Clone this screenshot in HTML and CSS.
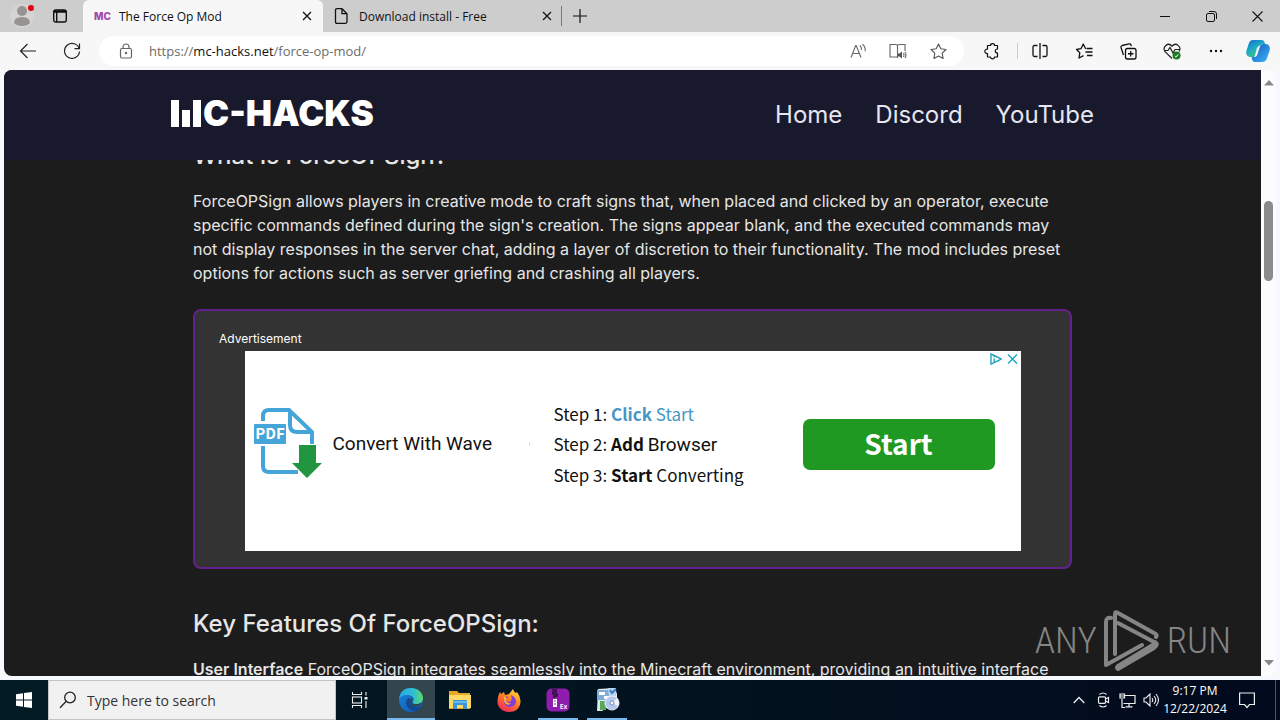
FILE: index.html
```
<!DOCTYPE html>
<html lang="en">
<head>
<meta charset="utf-8">
<title>The Force Op Mod</title>
<link rel="stylesheet" href="styles.css">
</head>
<body>
<div class="tabbar">
  <button class="profile" aria-label="Profile">
    <svg width="28" height="28" viewBox="0 0 28 28"><circle cx="14" cy="14" r="12" fill="#d6d4d2"/><circle cx="14" cy="9" r="5" fill="#969492"/><path d="M6 21q0-6 8-6t8 6q-3 3-8 3t-8-3z" fill="#969492"/><circle cx="23" cy="6" r="3" fill="#e3000f"/></svg>
  </button>
  <button class="workspaces" aria-label="Tab actions">
    <svg width="16" height="16" viewBox="0 0 16 16" fill="none" stroke="#111" stroke-width="1.4"><rect x="1.7" y="2" width="12.6" height="12" rx="2"/><path d="M2 3.500h12" stroke-width="2.500"/><path d="M4.700 4v10"/></svg>
  </button>
  <div class="tab tab-active">
    <span class="favicon">MC</span>
    <span class="tab-title">The Force Op Mod</span>
    <button class="tab-close" aria-label="Close tab"><svg width="10" height="10" viewBox="0 0 10 10" stroke="#111" stroke-width="1.3"><path d="M1 1l8 8M9 1l-8 8"/></svg></button>
  </div>
  <div class="tab tab-second">
    <svg class="page-icon" width="16" height="18" viewBox="0 0 16 18" fill="none" stroke="#111" stroke-width="1.3"><path d="M4 1.700h5l5 5v8.100q0 1.500-1.500 1.500h-8.500q-1.500 0-1.500-1.500v-11.600q0-1.500 1.500-1.500zM9 2v4.700h5"/></svg>
    <span class="tab-title">Download install - Free</span>
    <button class="tab-close" aria-label="Close tab"><svg width="10" height="10" viewBox="0 0 10 10" stroke="#111" stroke-width="1.2"><path d="M1 1l8 8M9 1l-8 8"/></svg></button>
  </div>
  <button class="new-tab" aria-label="New tab"><svg width="14" height="14" viewBox="0 0 14 14" stroke="#111" stroke-width="1.2"><path d="M7 0v14M0 7h14"/></svg></button>
  <div class="window-controls">
    <button aria-label="Minimize"><svg width="10" height="10" viewBox="0 0 10 10"><path d="M0 5.500h10" stroke="#111"/></svg></button>
    <button aria-label="Restore"><svg width="11" height="11" viewBox="0 0 11 11" fill="none" stroke="#111"><rect x=".5" y="2.500" width="8" height="8" rx="1.500"/><path d="M3 .500h5q2.500 0 2.500 2.500v5"/></svg></button>
    <button aria-label="Close"><svg width="11" height="11" viewBox="0 0 11 11" stroke="#111" stroke-width="1.100"><path d="M.5.500l10 10M10.500.500l-10 10"/></svg></button>
  </div>
</div>
<div class="toolbar">
  <button class="tool" aria-label="Back"><svg width="18" height="16" viewBox="0 0 18 16" fill="none" stroke="#222" stroke-width="1.200"><path d="M17 8H1.500M8.500 1l-7 7 7 7"/></svg></button>
  <button class="tool" aria-label="Refresh"><svg width="18" height="18" viewBox="0 0 18 18" fill="none" stroke="#222" stroke-width="1.200"><path d="M16.300 7A7.500 7.500 0 1 0 16.500 9.500M16.500 1.500v5.200h-5"/></svg></button>
  <div class="address">
    <button class="lock" aria-label="Site information"><svg width="14" height="16" viewBox="0 0 14 16" fill="none" stroke="#666" stroke-width="1.200"><rect x="1.500" y="5.500" width="11" height="9.500" rx="1.500"/><path d="M4 5.500V4a3 3 0 0 1 6 0v1.500"/><circle cx="7" cy="10" r=".6" fill="#666"/></svg></button>
    <a class="url" href="https://mc-hacks.net/force-op-mod/">https://<span class="host">mc-hacks.net</span>/force-op-mod/</a>
    <button class="page-action" aria-label="Read aloud"><svg width="17" height="16" viewBox="0 0 17 16" fill="none" stroke="#666" stroke-width="1.100"><path d="M1 14.500L5.700 2.500h.5L11 14.500M2.800 10.500h6.300M10 2.500q1.700 1.500 1.500 4.500M12.500 1.200q3.200 2.500 2.700 7"/></svg></button>
    <button class="page-action" aria-label="Immersive reader"><svg width="18" height="16" viewBox="0 0 18 16" fill="none" stroke="#666" stroke-width="1.100"><path d="M8.500 14H1V1.500h5.500q2 0 2 1.500 0-1.500 2-1.500H16V8M8.500 3v12"/><path d="M9 10.500h1.500l2.500-2v7l-2.500-2H9z" fill="#555" stroke="none"/><path d="M14.500 10q1 2 0 4M16 9q2 3 0 6"/></svg></button>
    <button class="page-action" aria-label="Add to favorites"><svg width="17" height="17" viewBox="0 0 17 17" fill="none" stroke="#555" stroke-width="1.100" stroke-linejoin="round"><path d="M8.500 1l2.300 4.800 5.200.7-3.800 3.700.9 5.300-4.600-2.500-4.600 2.500.9-5.300L1 6.500l5.200-.7z"/></svg></button>
  </div>
  <button class="tool tool-extensions" aria-label="Extensions"><svg width="17" height="17" viewBox="0 0 17 17" fill="none" stroke="#111" stroke-width="1.200" stroke-linejoin="round"><path d="M4.500 2.500h3a2 1.800 0 0 1 4 0h3V6a2.200 2 0 0 0 0 4v4h-3a2 1.800 0 0 1-4 0h-3v-3.500a2.200 2.200 0 1 1 0-4.300z"/></svg></button>
  <span class="tool-divider"></span>
  <button class="tool" aria-label="Split screen"><svg width="16" height="16" viewBox="0 0 16 16" fill="none" stroke="#111" stroke-width="1.300"><path d="M5.500 2.500H2.500q-1.500 0-1.500 1.500v8q0 1.500 1.500 1.500h3M10.500 2.500h3q1.500 0 1.500 1.500v8q0 1.500-1.500 1.500h-3M8 0v16"/></svg></button>
  <button class="tool" aria-label="Favorites"><svg width="17" height="16" viewBox="0 0 17 16" fill="none" stroke="#111" stroke-width="1.300" stroke-linejoin="round"><path d="M10 5.500H9.500L7.200 1 5 5.700l-4.500.8 3.300 3.200L3 15l4.500-2.300M10.500 5.500h6M9.500 9h7M11 12.500h5.500"/></svg></button>
  <button class="tool" aria-label="Collections"><svg width="17" height="17" viewBox="0 0 17 17" fill="none" stroke="#111" stroke-width="1.300"><rect x="5.500" y="5.500" width="10.500" height="10.500" rx="2"/><path d="M10.750 8v5.500M8 10.750h5.500M3.500 12L1 4.500q-.3-1.500 1.200-2L9 .900q1.500-.3 2 1l.3 1.300"/></svg></button>
  <button class="tool" aria-label="Browser essentials"><svg width="18" height="17" viewBox="0 0 18 17" fill="none" stroke="#222" stroke-width="1.200"><path d="M9 15.500L2 8.700C-1 4 5-1.500 9 3.200c4-4.700 10 .8 7 5.300M1 7.500h4l2-3 3 5.500 2-3.500h5"/><circle cx="13.500" cy="12.500" r="4" fill="#197b25" stroke="none"/><path d="M11.700 13l1.200 1.200 2.400-3" stroke="#fff" stroke-width="1"/></svg></button>
  <button class="tool" aria-label="Settings and more"><svg width="14" height="4" viewBox="0 0 14 4"><g fill="#111"><circle cx="2" cy="2" r="1.200"/><circle cx="7" cy="2" r="1.200"/><circle cx="12" cy="2" r="1.200"/></g></svg></button>
  <button class="copilot" aria-label="Copilot"><svg width="24" height="24" viewBox="0 0 24 24"><defs><linearGradient id="cpA" x2=".6" y2="1"><stop stop-color="#1765c8"/><stop offset=".45" stop-color="#18a5c8"/><stop offset="1" stop-color="#45c48c"/></linearGradient><linearGradient id="cpB" y2="1"><stop stop-color="#1654bd"/><stop offset="1" stop-color="#3bb8fa"/></linearGradient></defs><path d="M17 5h3q5 1 3.500 7L21 19q-1 4-5 4H9q-2.500 0-3-3l-.4-2H8q2.200 0 3-2l2.800-8.500Q14.500 5 17 5z" fill="url(#cpB)"/><path d="M7 1h9q2 0 2.700 2.500L19 5h-2q-2.500 0-3.200 2.500L11 16q-.8 2-3 2H4q-5-1-3.500-6.500L3 4q1-3 4-3z" fill="url(#cpA)"/><path d="M15 6.500q-1 .5-1.500 2L11 16q-.7 1.800-2.500 2L11 9q.8-2.300 4-2.500z" fill="#f7f7f7"/></svg></button>
</div>
<div class="window">
  <div class="page">
    <header class="site-header">
      <div class="site-header-inner">
        <a class="logo" href="#"><svg width="32" height="27" viewBox="0 0 32 27" fill="#fff" aria-hidden="true"><path d="M0 0h8v27H0zM11 10h8v17h-8zM22 0h8v27h-8z"/></svg><span>C-HACKS</span></a>
        <nav class="site-nav"><a href="#">Home</a><a href="#">Discord</a><a href="#">YouTube</a></nav>
      </div>
    </header>
    <main class="article">
      <h2>What Is ForceOPSign?</h2>
      <p>ForceOPSign allows players in creative mode to craft signs that, when placed and clicked by an operator, execute<br>specific commands defined during the sign's creation. The signs appear blank, and the executed commands may<br>not display responses in the server chat, adding a layer of discretion to their functionality. The mod includes preset<br>options for actions such as server griefing and crashing all players.</p>
      <section class="ad-box">
        <div class="ad-label">Advertisement</div>
        <div class="ad">
          <div class="ad-product">
            <svg width="70" height="72" viewBox="0 0 70 72" fill="none" stroke="#45a5d8" stroke-width="4"><path d="M9 13V8q0-6 6-6h20l23 22v12M36 2v15q0 7 7 7h15M9 38v20q0 6 6 6h29"/><rect y="16" width="32" height="20" rx="1" fill="#45a5d8" stroke="none"/><path d="M45 37h17v18h6L53 70 38 55h7z" fill="#219540" stroke="none"/><text x="16" y="31" text-anchor="middle" class="pdf-text">PDF</text></svg>
            <span>Convert With Wave</span>
          </div>
          <span class="ad-divider"></span>
          <ul class="steps">
            <li>Step 1: <span class="blue"><b>Click</b> Start</span></li>
            <li>Step 2: <b>Add</b> <span class="roboto">Browser</span></li>
            <li>Step 3: <b>Start</b> Converting</li>
          </ul>
          <button class="ad-start">Start</button>
          <div class="ad-choices">
            <svg width="12" height="12" viewBox="0 0 12 12" fill="none" stroke="#21a6bd" stroke-width="1.400"><path d="M1 1l10.500 5L1 11.200zM4.200 5.500v3.500M4.200 3.200v1"/></svg>
            <svg width="11" height="12" viewBox="0 0 11 12" stroke="#21a6bd" stroke-width="1.500"><path d="M1 1.500l9 9M10 1.500l-9 9"/></svg>
          </div>
        </div>
      </section>
      <h2>Key Features Of ForceOPSign:</h2>
      <p><b>User Interface</b> ForceOPSign integrates seamlessly into the Minecraft environment, providing an intuitive interface</p>
    </main>
  </div>
  <div class="scrollbar">
    <svg width="10" height="6" viewBox="0 0 10 6"><path d="M5 0l5 5.500H0z" fill="#888"/></svg>
    <span class="thumb"></span>
    <svg width="10" height="6" viewBox="0 0 10 6"><path d="M5 5.500L0 0h10z" fill="#888"/></svg>
  </div>
</div>
<div class="taskbar">
  <button class="task start" aria-label="Start"><svg width="16" height="16" viewBox="0 0 16 16" fill="#fff"><path d="M0 2.300L7 1.200v6.300H0zM8 1l8-1v7.500H8zM0 8.500h7v6.300l-7-1zM8 8.500h8V16l-8-1z"/></svg></button>
  <label class="search"><svg width="18" height="18" viewBox="0 0 18 18" fill="none" stroke="#222" stroke-width="1.300"><circle cx="11" cy="6.500" r="5.300"/><path d="M7 10.500L1 16.800"/></svg><input type="text" placeholder="Type here to search" aria-label="Search"></label>
  <button class="task taskview" aria-label="Task view"><svg width="18" height="16" viewBox="0 0 18 16" fill="none" stroke="#eee" stroke-width="1.100"><path d="M1.500 0v2.500h9V0M1.500 16v-2.500h9V16"/><rect x="1.500" y="5" width="9" height="6"/><path d="M15 0v3.500M15 9v7"/><path d="M13.500 5h3v2.500h-3z" fill="#eee" stroke="none"/></svg></button>
  <div class="apps">
    <button class="app current" aria-label="Microsoft Edge"><svg width="26" height="26" viewBox="0 0 26 26"><defs><linearGradient id="edA"><stop stop-color="#29a6e5"/><stop offset=".6" stop-color="#30bfd0"/><stop offset="1" stop-color="#5fd864"/></linearGradient><linearGradient id="edB" y2="1"><stop stop-color="#1687d9"/><stop offset="1" stop-color="#1152ae"/></linearGradient></defs><circle cx="13" cy="13" r="12" fill="url(#edB)"/><path d="M1 12C2 4 7 1 13 1c8 0 12 6 12 10 0 4-3 6-6 6-2 0-5-.5-4-2.500 2-2.500 0-6.500-5-6.500-4 0-8 1.500-9 4z" fill="url(#edA)"/><path d="M10 11c-5 6 1 13 8 13 3-1 5-3 6-5-5 3-14 0-11-5-.5-1.500-1-3-3-3z" fill="#114a8b"/><path d="M14 11c2 2-.5 3.500 0 5 2 2 6 1.500 9.500-.5-1 3-3 4-6 4-5 0-7-5-3.500-8.500z" fill="#33464d"/></svg></button>
    <button class="app" aria-label="File Explorer"><svg width="24" height="22" viewBox="0 0 24 22"><path d="M1 2h8l2 2h11v16H1z" fill="#e9a823"/><path d="M1 6h22v13H1z" fill="#ffd968"/><path d="M5 20v-8q0-1 1-1h12q1 0 1 1v8h-4v-4H9v4z" fill="#3a96d8"/><path d="M5 12h14v2H5z" fill="#63b8ec"/></svg></button>
    <button class="app" aria-label="Firefox"><svg width="24" height="25" viewBox="0 0 24 25"><defs><linearGradient id="ff" x1=".8" x2=".2" y2="1"><stop stop-color="#ffe13a"/><stop offset=".45" stop-color="#ff8026"/><stop offset="1" stop-color="#ee225d"/></linearGradient></defs><path d="M3 4l1 2 3-2 1 3 4-1 4-5q1 3 3 4l1-1q4 5 3.500 10C23 21 18 24 12 24S0 20 .500 13Q1 7 3 4z" fill="url(#ff)"/><path d="M7 9q2-1 4 0 0 1.500-2 2 0 3 3 3 4-1 2-7 5 2 5 7-1 5-7 5-6-1-5-10z" fill="#8040d8"/><path d="M7 8l3 2-1 2q1 4 5 3-2 3-5 1-3-3-2-8z" fill="#ffad30"/></svg></button>
    <button class="app running" aria-label="Archive tool"><svg width="24" height="24" viewBox="0 0 24 24"><rect x=".5" y=".5" width="23" height="23" rx="5" fill="#8e1cac"/><path d="M6 2h4v2H7v2h4v2H8v2" fill="none" stroke="#30103d" stroke-width="1.600"/><rect x="7" y="11" width="4" height="8" fill="#fff"/><path d="M8 13h2M8 16h2" stroke="#555"/><text x="14" y="21" class="app-text">Ex</text></svg></button>
    <button class="app running" aria-label="Installer"><svg width="25" height="26" viewBox="0 0 25 26"><path d="M3 2l17-1 2 6v8L7 24H2z" fill="#dce9ef"/><path d="M2 3h12v10H2z" fill="#80abd9"/><path d="M4 5h6v3H4zM9 9h6v3H9z" fill="#fff"/><path d="M13 1h8v8h-7z" fill="#b9d8ed"/><path d="M15 3l2 3 4-4" fill="none" stroke="#3d76c8" stroke-width="2"/><path d="M5 14h6v9H5z" fill="#58a957"/><circle cx="17" cy="16" r="7" fill="#b4c7ee" stroke="#eee"/><path d="M17 16l5-5q3 4 1 8z" fill="#eef4ff"/><circle cx="17" cy="16" r="2" fill="#fff" stroke="#7d8dbc"/></svg></button>
  </div>
  <div class="tray">
    <button class="tray-icon" aria-label="Show hidden icons"><svg width="12" height="8" viewBox="0 0 12 8" fill="none" stroke="#eee" stroke-width="1.300"><path d="M.7 7L6 1.500 11.300 7"/></svg></button>
    <button class="tray-icon" aria-label="Meet now"><svg width="13" height="16" viewBox="0 0 13 16" fill="none" stroke="#eee" stroke-width="1.200"><path d="M2.500 2.500q3.500-3 7 0M2.500 13.500q3.500 3 7 0"/><rect x="1.500" y="4.800" width="7" height="6.500" rx="1"/><path d="M8.500 7l3-1.500v5L8.500 9"/></svg></button>
    <button class="tray-icon" aria-label="Network"><svg width="17" height="15" viewBox="0 0 17 15" fill="none" stroke="#eee" stroke-width="1.200"><path d="M6 2.500h10v8H4.500M10 10.500v3M6.500 13.800h7M3 6v8.500h3"/><path d="M1 1h4.500v4H1zM1 3h4.500"/></svg></button>
    <button class="tray-icon" aria-label="Volume"><svg width="17" height="14" viewBox="0 0 17 14" fill="none" stroke="#eee" stroke-width="1.100"><path d="M1 5h2l4-4v12L3 9H1zM9 5q1.500 2 0 4M11 3q3.500 4 0 8M13 1q5 6 0 12"/></svg></button>
    <time class="clock"><span>9:17 PM</span><span>12/22/2024</span></time>
    <button class="notifications" aria-label="Notifications"><svg width="16" height="17" viewBox="0 0 16 17" fill="none" stroke="#eee" stroke-width="1.200"><path d="M.6 1h14.800v11.500H10.500L8 15.500l-2.500-3H.6z"/></svg></button>
    <span class="show-desktop"></span>
  </div>
</div>
<div class="watermark" aria-label="ANY RUN"><span>ANY</span><svg width="56" height="62" viewBox="0 0 56 62" fill="none" stroke="#858585" stroke-width="4" stroke-linecap="round" stroke-linejoin="round"><path d="M7 8q-5-1-5 4v43l36-20M11 44V4q0-3 3-1l36 20q4 2 2 4M14 13l38 20-38 23q-2 2 0 3l36-21q5-4 1-6"/></svg><span>RUN</span></div>
</body>
</html>
```
FILE: styles.css
```
* { box-sizing: border-box; }
body {
  margin: 0;
  height: 100vh;
  display: flex;
  flex-direction: column;
  overflow: hidden;
  background: #f7f7f7;
  color: #111;
  font-family: "Open Sans", "Noto Sans", sans-serif;
  font-size: 12px;
}
button {
  display: flex;
  align-items: center;
  justify-content: center;
  padding: 0;
  border: 0;
  background: none;
  font: inherit;
}
a { color: inherit; text-decoration: none; }
svg { flex: none; }

.tabbar { display: flex; height: 32px; flex: none; background: #cdcdcd; }
.profile { width: 44px; }
.workspaces { width: 39px; padding-right: 7px; }
.tab { display: flex; align-items: center; }
.tab-active { width: 240px; padding: 0 4px 0 11px; background: #f7f7f7; border-radius: 6px 6px 0 0; }
.favicon { width: 25px; font: 800 10px Inter, sans-serif; color: #a044a8; }
.tab-title { flex: 1; white-space: nowrap; }
.tab-close { width: 24px; height: 24px; }
.tab-second {
  width: 239px;
  padding: 0 3px 0 10px;
  background: linear-gradient(#777, #777) right center / 1px 20px no-repeat;
}
.page-icon { margin-right: 10px; }
.new-tab { width: 36px; }
.window-controls { display: flex; margin-left: auto; }
.window-controls button { width: 46px; }

.toolbar { display: flex; align-items: center; height: 38px; flex: none; padding: 0 2px 0 6px; }
.tool { width: 44px; height: 30px; }
.address {
  display: flex;
  align-items: center;
  flex: 1;
  height: 30px;
  margin: 0 5px;
  padding: 0 6px 0 5px;
  border-radius: 15px;
  background: #fff;
}
.lock { width: 44px; margin-right: 1px; }
.url { flex: 1; font-size: 13px; color: #6c6c6c; }
.host { color: #111; }
.page-action { width: 40px; }
.tool-divider { width: 5px; height: 16px; border-right: 1px solid #ccc; }
.copilot { width: 40px; }

.window { display: flex; flex: 1; min-height: 0; padding: 0 4px 4px; background: #f5f8fd; }
.page {
  flex: 1;
  min-width: 0;
  overflow: hidden;
  border-radius: 8px 0 0 8px;
  background: #1c1c1c;
  color: #e6e6e6;
  font-family: Inter, sans-serif;
}
.site-header { position: relative; z-index: 1; height: 90px; background: #19192d; }
.site-header-inner {
  display: flex;
  align-items: center;
  justify-content: space-between;
  max-width: 923px;
  height: 86px;
  margin: 0 auto;
}
.logo { display: flex; align-items: center; color: #fff; font-size: 35px; font-weight: 900; line-height: 40px; }
.site-nav { display: flex; gap: 33px; padding-top: 3px; color: #e6e6f0; font-size: 24px; line-height: 40px; }
.article { max-width: 879px; margin: -24px auto 0; font-size: 16px; line-height: 24px; }
.article h2 { margin: 0 0 13px; font-size: 24px; font-weight: 500; line-height: 40px; }
.article p { margin: 0; white-space: nowrap; }
.article p b { font-weight: 600; }
.ad-box {
  margin: 24px 0 35px;
  padding: 16px 24px;
  border: 2px solid #64208c;
  border-radius: 8px;
  background: #333;
}
.ad-label { font-size: 12px; color: #fff; }
.ad {
  position: relative;
  display: flex;
  align-items: center;
  max-width: 776px;
  height: 200px;
  margin: 0 auto;
  padding: 0 26px 14px 9px;
  background: #fff;
  color: #111;
}
.ad-product { display: flex; align-items: center; gap: 9px; width: 275px; font-family: Roboto, sans-serif; font-size: 19px; }
.pdf-text { fill: #fff; stroke: none; font: 700 15px "Noto Sans CJK SC", sans-serif; }
.ad-divider { width: 1px; height: 4px; background: #ddd; margin-right: 24px; }
.steps { flex: 1; margin: 0; padding: 0; list-style: none; font-family: "Noto Sans CJK SC", sans-serif; font-size: 17px; line-height: 30px; white-space: nowrap; }
.steps b { font-weight: 700; }
.blue { color: #4795c5; }
.roboto { font-family: Roboto, sans-serif; font-size: 19px; }
.ad-start { width: 192px; height: 51px; padding-bottom: 2px; border-radius: 7px; background: #1f9922; color: #fff; font: 700 28px "Noto Sans CJK SC", sans-serif; }
.ad-choices { position: absolute; top: 2px; right: 3px; display: flex; gap: 5px; }

.scrollbar {
  display: flex;
  flex-direction: column;
  align-items: center;
  justify-content: space-between;
  width: 15px;
  padding: 10px 0;
  border-radius: 0 8px 8px 0;
  background: #fcfcfc;
}
.thumb { width: 9px; height: 80px; margin: 115px 0 auto; border-radius: 5px; background: #8b8b8b; }

.taskbar { display: flex; height: 40px; flex: none; background: linear-gradient(90deg, #021b25, #02131f 50%, #020a1d); color: #fff; }
.task { width: 48px; }
.search {
  display: flex;
  align-items: center;
  gap: 10px;
  width: 288px;
  padding-left: 10px;
  border: 1px solid #c4c4c4;
  background: #f1f1f1;
}
.search input { flex: 1; min-width: 0; padding: 0; border: 0; outline: 0; background: none; font: 14px "Open Sans", sans-serif; }
.search input::placeholder { color: #333; opacity: 1; }
.apps { display: flex; gap: 1px; margin-left: 3px; }
.app { width: 48px; }
.current { background: linear-gradient(#76b9ed, #76b9ed) bottom / 100% 2px no-repeat #33464d; }
.running { background: linear-gradient(#76b9ed, #76b9ed) bottom / 40px 2px no-repeat; }
.app-text { fill: #fff; font: 700 6px Inter, sans-serif; }
.tray { display: flex; margin-left: auto; }
.tray-icon { width: 24px; }
.clock { display: flex; flex-direction: column; align-items: center; justify-content: center; width: 64px; line-height: 18px; }
.notifications { width: 40px; }
.show-desktop { width: 13px; background: linear-gradient(#4c5666, #4c5666) 8px 0 / 1px 100% no-repeat; }

.watermark {
  position: absolute;
  right: 49px;
  bottom: 48px;
  display: flex;
  align-items: center;
  gap: 7px;
  color: #858585;
  font: 300 37px/62px "Roboto Condensed", "Open Sans Condensed", sans-serif;
}
```
